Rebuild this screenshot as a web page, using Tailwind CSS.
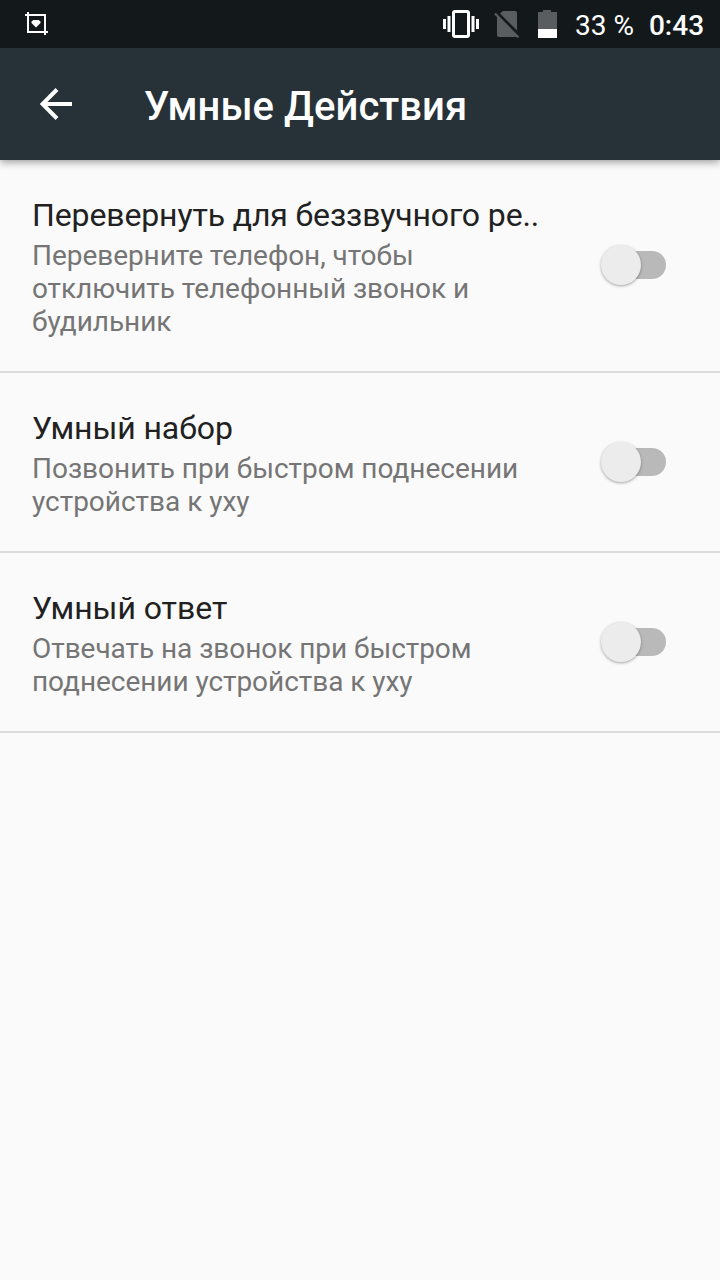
<!DOCTYPE html>
<html lang="ru">
<head>
<meta charset="utf-8">
<title>Умные Действия</title>
<script src="https://cdn.jsdelivr.net/npm/@tailwindcss/browser@4"></script>
</head>
<body class="w-[720px] h-[1280px] overflow-hidden bg-[#fafafa] font-['Roboto',sans-serif] flex flex-col">
<div class="relative z-20 h-12 shrink-0 bg-[#13181b] flex items-center text-white text-[28px] leading-none">
<svg class="ml-6 w-6 h-6" viewBox="0 0 24 24" fill="none" stroke="#fff" stroke-width="2"><path d="M1 3H21V23M4 0V20H24"/><path d="M12 15.500L7.500 11V9.500L9.500 8H14.500L16.500 9.500V11Z" fill="#fff" stroke="none"/></svg>
<svg class="ml-[395px] w-9 h-9" viewBox="0 0 36 36" fill="none" stroke="#fff" stroke-width="3"><rect x="10.500" y="5.500" width="15" height="25" rx="1.500"/><path d="M1.500 13v10M6 10v16M30 10v16M34.500 13v10"/></svg>
<svg class="ml-[14px] w-7 h-8" viewBox="0 0 28 32"><path d="M10 3H22a2 2 0 0 1 2 2V22.500L7 5.500ZM4 8L24 28a2 2 0 0 1-2 1H6a2 2 0 0 1-2-2Z" fill="#5a5d5f"/><path d="M2 5.500L25.500 29.500" stroke="#5a5d5f" stroke-width="2.200"/></svg>
<svg class="ml-[16px] w-5 h-8" viewBox="0 0 20 32"><path d="M6 2h8v2h6v17H1V4h5z" fill="#5a5d5f"/><path d="M1 21h19v9H1z" fill="#fff"/></svg>
<span class="ml-[18px] mt-1">33 %</span><span class="ml-[15px] mt-1 font-medium">0:43</span>
</div>
<header class="relative h-28 shrink-0 bg-[#263238] shadow-[0_2px_8px_rgba(0,0,0,0.4)] flex items-center text-white">
<svg class="ml-10 w-8 h-8" viewBox="0 0 32 32" fill="none" stroke="#fff" stroke-width="4"><path d="M32 16H3M17 1.500L2.500 16L17 30.500"/></svg>
<h1 class="ml-[72px] mt-1.5 text-[40px] font-medium leading-none tracking-[0.05px] whitespace-nowrap">Умные Действия</h1>
</header>
<main class="text-[#212121]">
<section class="h-[213px] border-b-2 border-[#dcdcdc] flex items-center pl-8 pr-[54px] justify-between">
<div class="pt-1"><h2 class="pb-[5px] text-[32px] leading-[37px] tracking-[-0.13px] whitespace-nowrap">Перевернуть для беззвучного ре..</h2><p class="text-[28px] leading-[33px] tracking-[-0.05px] text-[#757575] whitespace-nowrap">Переверните телефон, чтобы<br>отключить телефонный звонок и<br>будильник</p></div>
<div class="mb-px w-[65px] h-10 flex items-center"><span class="relative z-10 size-10 shrink-0 rounded-full bg-[#ececec] shadow-[0_1px_3px_rgba(0,0,0,0.35)]"></span><span class="-ml-5 w-[45px] h-7 rounded-full bg-[#b9b9b9]"></span></div>
</section>
<section class="h-[180px] border-b-2 border-[#dcdcdc] flex items-center pl-8 pr-[54px] justify-between">
<div class="pt-1"><h2 class="pb-[5px] text-[32px] leading-[37px] tracking-[-0.08px] whitespace-nowrap">Умный набор</h2><p class="text-[28px] leading-[33px] tracking-[-0.02px] text-[#757575] whitespace-nowrap">Позвонить при быстром поднесении<br>устройства к уху</p></div>
<div class="w-[65px] h-10 flex items-center"><span class="relative z-10 size-10 shrink-0 rounded-full bg-[#ececec] shadow-[0_1px_3px_rgba(0,0,0,0.35)]"></span><span class="-ml-5 w-[45px] h-7 rounded-full bg-[#b9b9b9]"></span></div>
</section>
<section class="h-[180px] border-b-2 border-[#dcdcdc] flex items-center pl-8 pr-[54px] justify-between">
<div class="pt-1"><h2 class="pb-[5px] text-[32px] leading-[37px] tracking-[-0.04px] whitespace-nowrap">Умный ответ</h2><p class="text-[28px] leading-[33px] tracking-[-0.05px] text-[#757575] whitespace-nowrap">Отвечать на звонок при быстром<br>поднесении устройства к уху</p></div>
<div class="w-[65px] h-10 flex items-center"><span class="relative z-10 size-10 shrink-0 rounded-full bg-[#ececec] shadow-[0_1px_3px_rgba(0,0,0,0.35)]"></span><span class="-ml-5 w-[45px] h-7 rounded-full bg-[#b9b9b9]"></span></div>
</section>
</main>
</body>
</html>
